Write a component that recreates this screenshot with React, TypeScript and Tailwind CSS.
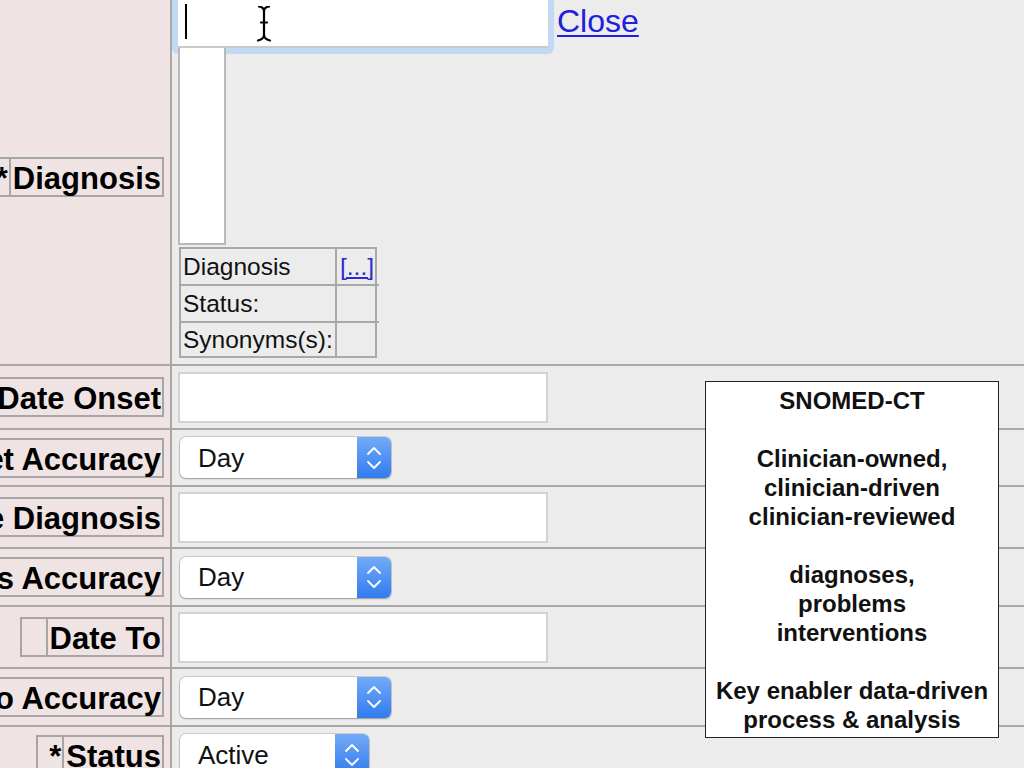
import React from "react";

const FONT = { fontFamily: '"Liberation Sans", Arial, sans-serif' };

function LabelBox({ cells }: { cells: { text: string; w?: string }[] }) {
  return (
    <div className="flex h-[40px] shrink-0 border-2 border-[#a6a6a6] bg-[#efe3e3]">
      {cells.map((c, i) => (
        <div
          key={i}
          className={`flex h-full items-center justify-end whitespace-nowrap pt-[4px] text-[31px] font-bold leading-[32px] text-black pr-[1px] pl-[2px] ${
            i > 0 ? "border-l-2 border-[#a6a6a6]" : ""
          } ${c.w ?? ""}`}
        >
          {c.text}
        </div>
      ))}
    </div>
  );
}

function Chevrons() {
  return (
    <svg width="16" height="24" viewBox="0 0 16 24" fill="none" stroke="white" strokeWidth="1.8" strokeLinecap="round" strokeLinejoin="round">
      <path d="M2 8 L8 2 L14 8" />
      <path d="M2 16 L8 22 L14 16" />
    </svg>
  );
}

function Select({ value, w }: { value: string; w: string }) {
  return (
    <div className={`flex h-[41px] ${w} rounded-[6px] bg-white shadow-[0_0_0_1px_rgba(0,0,0,0.13),0_1px_2px_rgba(0,0,0,0.25)]`}>
      <div className="flex flex-1 items-center pl-[18px] pt-[1px] text-[26px] text-[#111]">{value}</div>
      <div className="flex w-[34px] items-center justify-center rounded-r-[6px] bg-gradient-to-b from-[#72aaf7] to-[#2f7bef]">
        <Chevrons />
      </div>
    </div>
  );
}

function TextInput() {
  return <div className="h-[51px] w-[370px] border-2 border-[#d2d2d2] bg-white" />;
}

function Row({
  h,
  label,
  children,
  align = "items-center",
}: {
  h: string;
  label: React.ReactNode;
  children: React.ReactNode;
  align?: string;
}) {
  return (
    <div className={`flex ${h} border-b-2 border-[#a8a8a8]`}>
      <div className={`flex w-[172px] shrink-0 overflow-hidden border-r-2 border-[#a8a8a8] bg-[#efe3e3] justify-end pr-[6px] ${align}`}>
        {label}
      </div>
      <div className={`flex flex-1 ${align}`}>{children}</div>
    </div>
  );
}

function IBeam() {
  return (
    <svg width="18" height="36" viewBox="0 0 18 36" fill="none" stroke="black" strokeWidth="2.2" strokeLinecap="round">
      <path d="M4 0.5 Q9 1.5 9 5 V29 Q9 33 3 34.5" />
      <path d="M14 0.5 Q9 1.5 9 5" />
      <path d="M9 29 Q9 33 15 34.5" />
      <path d="M6 16.5 H12" />
    </svg>
  );
}

export default function App() {
  return (
    <div className="relative h-[768px] w-[1024px] overflow-hidden bg-[#ececec]" style={FONT}>
      {/* Top diagnosis row */}
      <div className="flex h-[366px] border-b-2 border-[#a8a8a8]">
        <div className="flex w-[172px] shrink-0 items-start justify-end overflow-hidden border-r-2 border-[#a8a8a8] bg-[#efe3e3] pr-[6px] pt-[157px]">
          <LabelBox cells={[{ text: "*", w: "w-[28px]" }, { text: "Diagnosis" }]} />
        </div>
        <div className="flex flex-1 flex-col">
          <div className="flex items-start">
            <div className="-mt-[14px] rounded-[6px] bg-[#c3d8f3] p-[6px]">
              <div className="relative h-[56px] w-[370px] border-b-2 border-[#c9c9c9] bg-white">
                <div className="absolute left-[7px] top-[12px] h-[35px] w-[2px] bg-black" />
                <div className="absolute left-[77px] top-[14px]">
                  <IBeam />
                </div>
              </div>
            </div>
            <a href="#" className="ml-[3px] mt-[3px] text-[32px] leading-[37px] text-[#2020dd] underline decoration-[2px] underline-offset-[3px]">
              Close
            </a>
          </div>
          <div className="relative z-10 -mt-[6px] ml-[6px] h-[197px] w-[48px] border-x-2 border-b-2 border-[#b9b9b9] bg-white" />
          <div className="ml-[7px] mt-[2px] grid w-[198px] grid-cols-[156px_42px] border-2 border-[#a8a8a8] text-[24.5px] leading-[28px] text-[#111]">
            <div className="flex h-[37px] items-center border-b-2 border-r-2 border-[#a8a8a8] pl-[2px]">Diagnosis</div>
            <div className="flex h-[37px] items-center border-b-2 border-[#a8a8a8] pl-[3px]">
              <a href="#" className="text-[#2a2ad8] underline">[...]</a>
            </div>
            <div className="flex h-[37px] items-center border-b-2 border-r-2 border-[#a8a8a8] pl-[2px]">Status:</div>
            <div className="flex h-[37px] items-center border-b-2 border-[#a8a8a8]" />
            <div className="flex h-[33px] items-center border-r-2 border-[#a8a8a8] pl-[2px]">Synonyms(s):</div>
            <div className="flex h-[33px] items-center" />
          </div>
        </div>
      </div>

      <Row h="h-[64px]" label={<LabelBox cells={[{ text: "Date Onset" }]} />}>
        <div className="pl-[6px]"><TextInput /></div>
      </Row>
      <Row h="h-[57px]" label={<LabelBox cells={[{ text: "Date Onset Accuracy" }]} />}>
        <div className="pl-[8px]"><Select value="Day" w="w-[211px]" /></div>
      </Row>
      <Row h="h-[62px]" label={<LabelBox cells={[{ text: "Date Diagnosis" }]} />}>
        <div className="pl-[6px]"><TextInput /></div>
      </Row>
      <Row h="h-[58px]" label={<LabelBox cells={[{ text: "Date Diagnosis Accuracy" }]} />}>
        <div className="pl-[8px]"><Select value="Day" w="w-[211px]" /></div>
      </Row>
      <Row h="h-[62px]" label={<LabelBox cells={[{ text: "", w: "w-[24px]" }, { text: "Date To" }]} />}>
        <div className="pl-[6px]"><TextInput /></div>
      </Row>
      <Row h="h-[58px]" label={<LabelBox cells={[{ text: "Date To Accuracy" }]} />}>
        <div className="pl-[8px]"><Select value="Day" w="w-[211px]" /></div>
      </Row>
      <div className="flex h-[60px]">
        <div className="flex w-[172px] shrink-0 items-start justify-end overflow-hidden border-r-2 border-[#a8a8a8] bg-[#efe3e3] pr-[6px] pt-[8px]">
          <LabelBox cells={[{ text: "*", w: "w-[24px]" }, { text: "Status" }]} />
        </div>
        <div className="flex flex-1 items-start pl-[8px] pt-[7px]">
          <Select value="Active" w="w-[189px]" />
        </div>
      </div>

      {/* Annotation overlay */}
      <div className="absolute left-[705px] top-[381px] h-[357px] w-[294px] border border-[#222] bg-white pt-[4px] text-center text-[24px] font-bold leading-[29px] text-[#111]">
        <div>SNOMED-CT</div>
        <div>&nbsp;</div>
        <div>Clinician-owned,</div>
        <div>clinician-driven</div>
        <div>clinician-reviewed</div>
        <div>&nbsp;</div>
        <div>diagnoses,</div>
        <div>problems</div>
        <div>interventions</div>
        <div>&nbsp;</div>
        <div>Key enabler data-driven</div>
        <div>process &amp; analysis</div>
      </div>
    </div>
  );
}
